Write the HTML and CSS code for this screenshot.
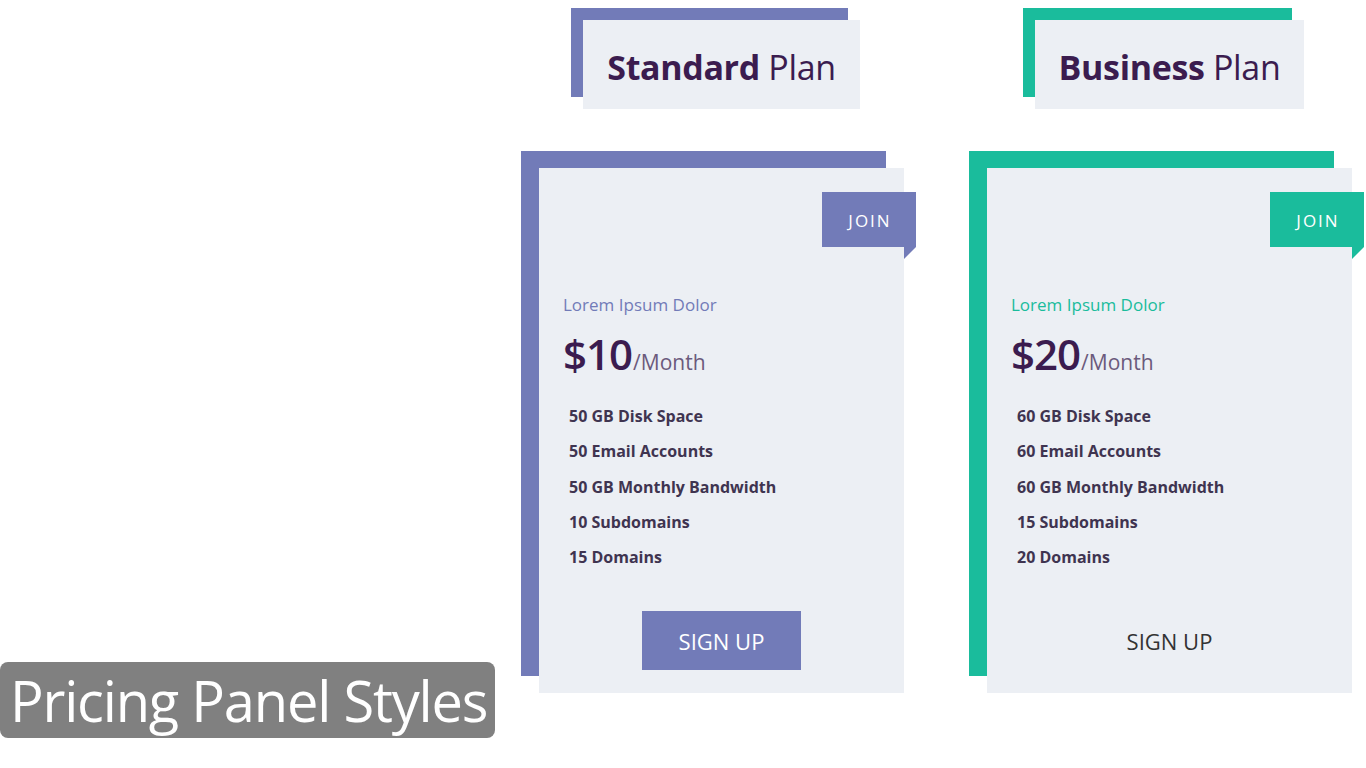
FILE: index.html
```html
<!DOCTYPE html>
<html lang="en">
<head>
<meta charset="utf-8">
<title>Pricing Panel Styles</title>
<link rel="stylesheet" href="styles.css">
</head>
<body>
<main class="pricing">
  <section class="plan plan-standard">
    <div class="plan-head"><h2 class="plan-title"><b>Standard</b> Plan</h2></div>
    <div class="card">
      <span class="join">JOIN</span>
      <p class="lead">Lorem Ipsum Dolor</p>
      <p class="price"><span class="amount">$10</span><span class="per">/Month</span></p>
      <ul class="features">
        <li>50 GB Disk Space</li>
        <li>50 Email Accounts</li>
        <li>50 GB Monthly Bandwidth</li>
        <li>10 Subdomains</li>
        <li>15 Domains</li>
      </ul>
      <div class="actions"><a class="signup signup-filled" href="#">SIGN UP</a></div>
    </div>
  </section>
  <section class="plan plan-business">
    <div class="plan-head"><h2 class="plan-title"><b>Business</b> Plan</h2></div>
    <div class="card">
      <span class="join">JOIN</span>
      <p class="lead">Lorem Ipsum Dolor</p>
      <p class="price"><span class="amount">$20</span><span class="per">/Month</span></p>
      <ul class="features">
        <li>60 GB Disk Space</li>
        <li>60 Email Accounts</li>
        <li>60 GB Monthly Bandwidth</li>
        <li>15 Subdomains</li>
        <li>20 Domains</li>
      </ul>
      <div class="actions"><a class="signup" href="#">SIGN UP</a></div>
    </div>
  </section>
</main>
<div class="caption">Pricing Panel Styles</div>
</body>
</html>
```

FILE: styles.css
```css
* { box-sizing: border-box; }
html, body { margin: 0; padding: 0; }
body {
  width: 1366px;
  height: 768px;
  background: #ffffff;
  font-family: "Open Sans", "Noto Sans", sans-serif;
  color: #3c2a4d;
  overflow: hidden;
  position: relative;
}
.pricing {
  display: flex;
  gap: 83px;
  padding: 20px 0 0 539px;
}
.plan {
  width: 365px;
  display: flex;
  flex-direction: column;
  align-items: center;
}
.plan-standard { --accent: #727bb8; }
.plan-business { --accent: #1abc9c; }

.plan-head {
  background: #eceff4;
  height: 89px;
  padding: 0 24px;
  display: flex;
  align-items: center;
  box-shadow: -12px -12px 0 0 var(--accent);
}
.plan-title {
  margin: 0;
  font-size: 34px;
  font-weight: 400;
  color: #3b1c4f;
  letter-spacing: -0.35px;
  line-height: 1;
  padding-top: 4px;
}
.plan-title b { font-weight: 700; }

.card {
  margin-top: 59px;
  width: 365px;
  height: 525px;
  background: #eceff4;
  box-shadow: -18px -17px 0 0 var(--accent);
  position: relative;
  padding: 126px 24px 0 24px;
  display: flex;
  flex-direction: column;
}
.join {
  position: absolute;
  top: 24px;
  right: -12px;
  width: 94px;
  height: 55px;
  background: var(--accent);
  color: #fff;
  font-size: 17px;
  letter-spacing: 2px;
  display: flex;
  align-items: center;
  justify-content: center;
  padding: 2px 0 0 2px;
}
.join::after {
  content: "";
  position: absolute;
  right: 0;
  top: 55px;
  border-top: 12px solid var(--accent);
  border-right: 12px solid transparent;
}
.lead {
  margin: 0;
  font-size: 17px;
  line-height: 22px;
  color: var(--accent);
}
.price {
  margin: 10px 0 0 0;
  line-height: 56px;
  height: 56px;
  color: #3b1c4f;
}
.amount { font-size: 42px; font-weight: 600; letter-spacing: -1px; }
.per { font-size: 21px; color: #6b5a7c; margin-left: 1px; }

.features {
  list-style: none;
  margin: 17px 0 0 0;
  padding: 0 0 0 6px;
}
.features li {
  font-size: 16px;
  font-weight: 700;
  line-height: 35.3px;
  color: #3f3450;
}
.actions {
  margin-top: auto;
  margin-bottom: 23px;
  display: flex;
  justify-content: center;
}
.signup {
  display: flex;
  align-items: center;
  justify-content: center;
  width: 159px;
  height: 59px;
  font-size: 22px;
  text-decoration: none;
  color: #333333;
}
.signup-filled {
  background: #727bb8;
  color: #ffffff;
}

.caption {
  position: absolute;
  left: 0;
  top: 662px;
  width: 495px;
  height: 76px;
  background: #808080;
  border-radius: 8px;
  color: #ffffff;
  font-size: 56px;
  font-weight: 500;
  line-height: 76px;
  padding-left: 10px;
  white-space: nowrap;
  letter-spacing: -1.2px;
}
```
